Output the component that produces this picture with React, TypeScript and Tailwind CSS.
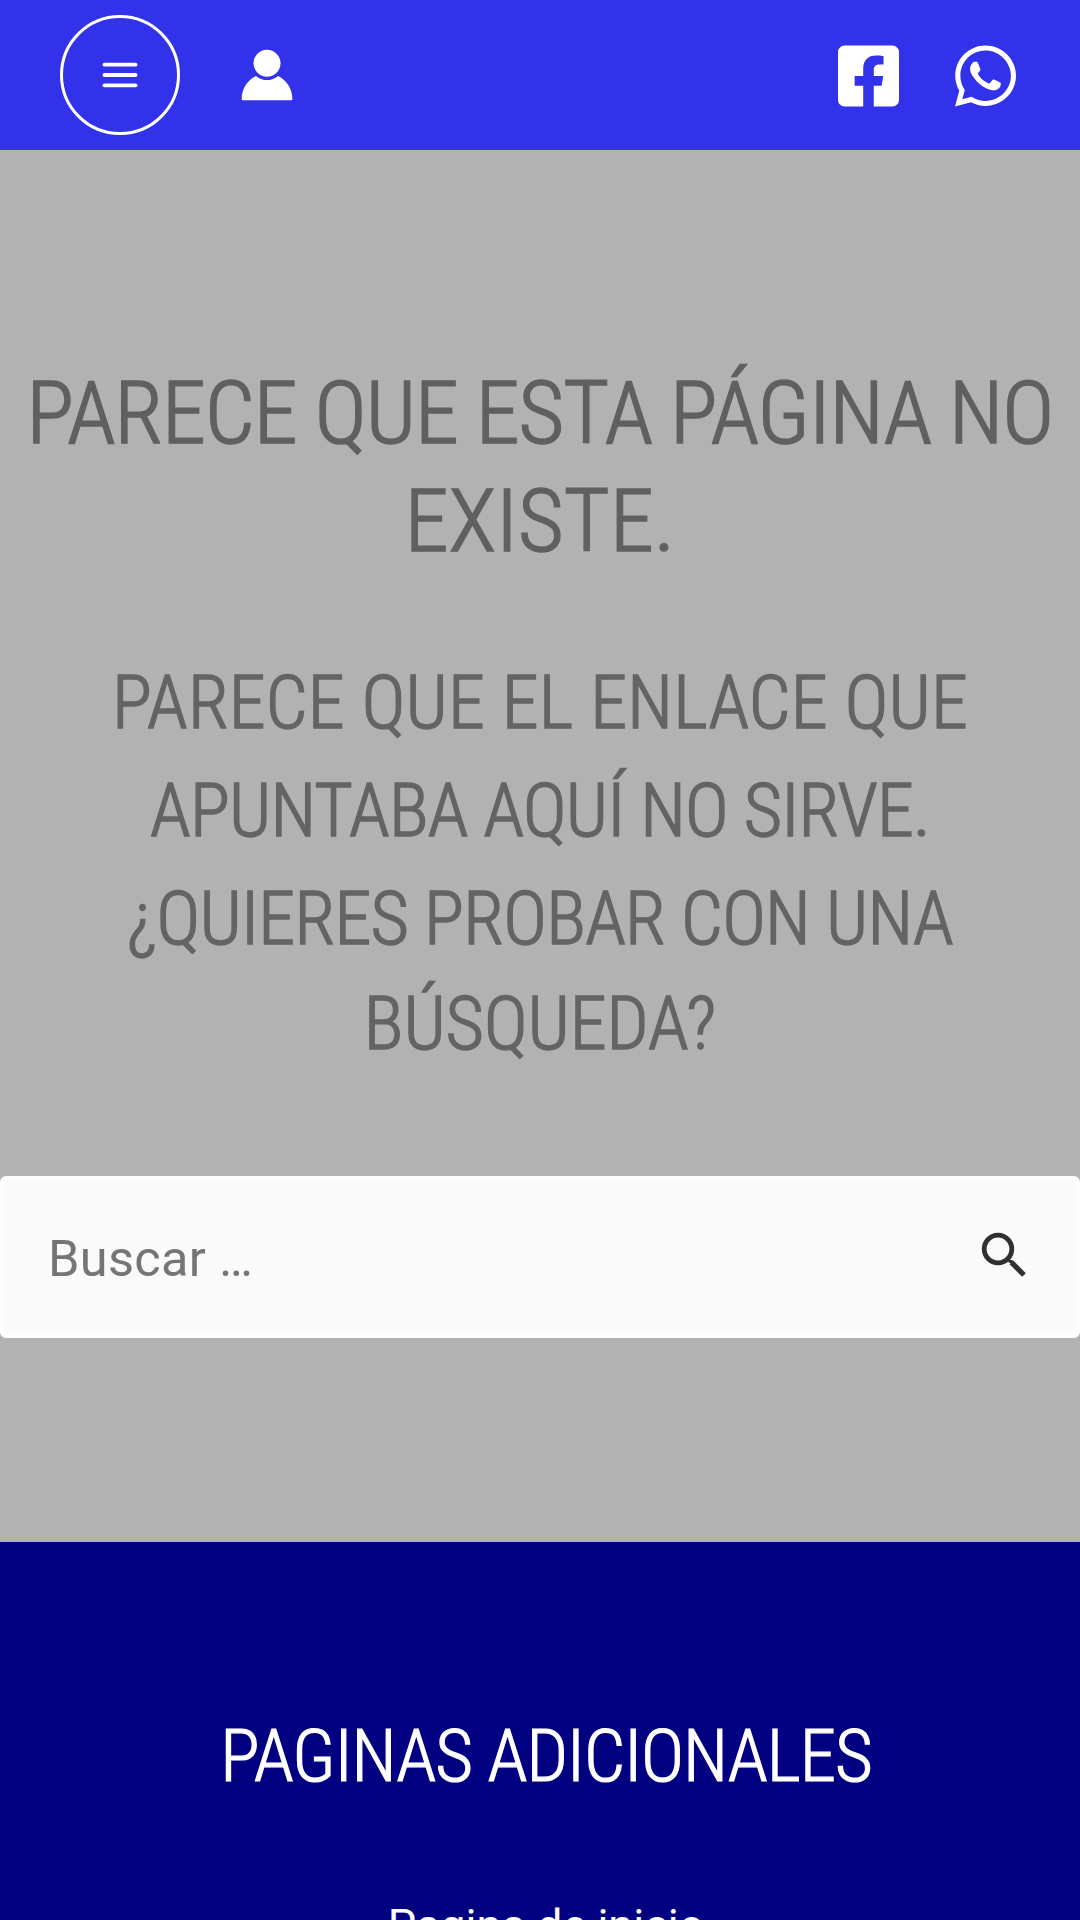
import type React from "react";
import { FaFacebookSquare, FaWhatsapp } from "react-icons/fa";

interface LineProps {
  children: React.ReactNode;
  className?: string;
}

const Line = ({ children, className = "" }: LineProps) => (
  <span className={`block whitespace-nowrap ${className}`}>{children}</span>
);

const MenuIcon = () => (
  <svg viewBox="0 0 24 24" className="h-[42px] w-[42px]" fill="currentColor">
    <rect x="2" y="5" width="20" height="2.2" rx="1.1" />
    <rect x="2" y="10.9" width="20" height="2.2" rx="1.1" />
    <rect x="2" y="16.8" width="20" height="2.2" rx="1.1" />
  </svg>
);

const AccountIcon = () => (
  <svg viewBox="0 0 120 120" className="h-[54px] w-[54px]" fill="currentColor">
    <path d="M84.6,62c-14.1,12.3-35.1,12.3-49.2,0C16.1,71.4,3.8,91,3.8,112.5c0,2.1,1.7,3.8,3.8,3.8h105c2.1,0,3.8-1.7,3.8-3.8C116.3,91,103.9,71.4,84.6,62z" />
    <circle cx="60" cy="33.8" r="30" />
  </svg>
);

const SearchIcon = () => (
  <svg viewBox="0 0 46 46" className="h-[46px] w-[46px]" fill="none" stroke="currentColor">
    <circle cx="17" cy="18" r="13.8" strokeWidth="4.8" />
    <path d="M28.6 30.2l2.4.6" strokeWidth="3" strokeLinecap="round" />
    <path d="M30.4 31.4l12.6 12.6" strokeWidth="5.2" />
  </svg>
);

const Header = () => (
  <header className="flex h-[150px] shrink-0 items-center bg-[#3232ea] pl-[60px] pr-[64px] text-white">
    <button
      aria-label="Menú"
      className="flex h-[120px] w-[120px] items-center justify-center rounded-full border-[3px] border-white"
    >
      <MenuIcon />
    </button>

    <a href="#" aria-label="Cuenta" className="ml-[60px]">
      <AccountIcon />
    </a>

    <div className="ml-auto flex items-center gap-14 pt-0.5">
      <a href="#" aria-label="Facebook">
        <FaFacebookSquare className="h-[70px] w-[61px]" />
      </a>
      <a href="#" aria-label="WhatsApp">
        <FaWhatsapp className="h-[70px] w-[61px]" />
      </a>
    </div>
  </header>
);

const SearchForm = () => (
  <form className="mt-[98px] flex h-[162px] items-center rounded-md border-[5px] border-[#fdfdfd] bg-[#fafafa] pl-[43px] pr-12">
    <input
      type="search"
      placeholder="Buscar …"
      className="h-full min-w-0 flex-1 bg-transparent pt-0.5 text-[50.5px] tracking-[0.3px] text-[#757575] outline-none placeholder:text-[#757575]"
    />
    <button type="button" aria-label="Buscar" className="-mt-1.5 text-[#303030]">
      <SearchIcon />
    </button>
  </form>
);

const Footer = () => (
  <footer className="flex-1 bg-[#000080] pl-[12px] pt-[174px] text-center text-white">
    <h2 className="text-[73px] font-light leading-[80px] tracking-[-1px] uppercase [-webkit-text-stroke:1.2px_white] [font-stretch:75%]">
      Paginas adicionales
    </h2>
    <a href="#" className="mt-[97px] block text-[45px] leading-[66px]">
      Pagina de inicio
    </a>
  </footer>
);

export default function App() {
  return (
    <div className="flex h-[1920px] w-[1080px] flex-col overflow-hidden bg-[#b2b2b2] font-['Roboto',sans-serif]">
      <Header />

      <main className="h-[1392px] shrink-0 pt-[209px]">
        <h1 className="text-center text-[88px] font-light leading-[108px] uppercase text-[#606060] [-webkit-text-stroke:1.7px_#606060] [font-stretch:75%]">
          <Line className="tracking-[-0.9px] [word-spacing:-1px]">Parece que esta página no</Line>
          <Line className="tracking-[0.3px]">existe.</Line>
        </h1>

        <p className="mt-[74px] text-center text-[74px] font-light leading-[108px] uppercase text-[#646464] [-webkit-text-stroke:1.5px_#646464] [font-stretch:75%]">
          <Line className="tracking-[0.2px]">Parece que el enlace que</Line>
          <Line className="tracking-[-0.8px]">apuntaba aquí no sirve.</Line>
          <Line className="tracking-[-0.7px]">¿Quieres probar con una</Line>
          <Line className="-mt-[3px]">búsqueda?</Line>
        </p>

        <SearchForm />
      </main>

      <Footer />
    </div>
  );
}
